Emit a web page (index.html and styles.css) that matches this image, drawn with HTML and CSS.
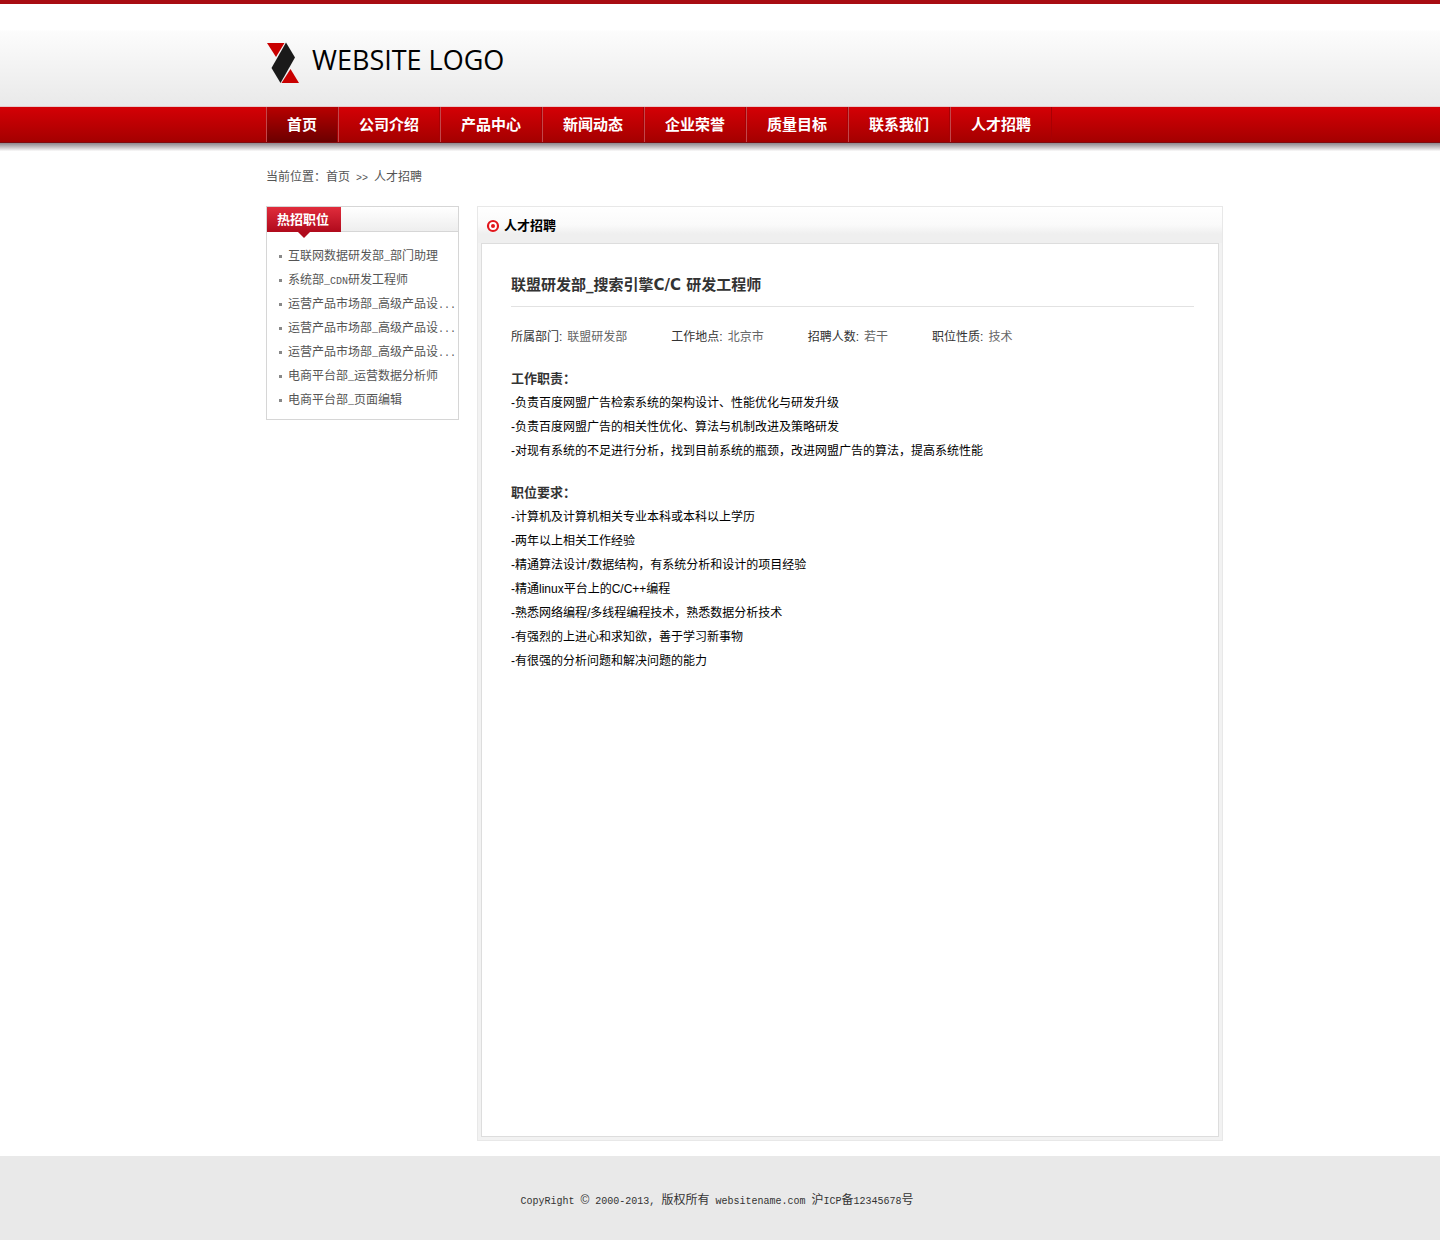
FILE: index.html
```html
<!DOCTYPE html>
<html lang="zh-CN">
<head>
<meta charset="utf-8">
<meta name="viewport" content="width=device-width, initial-scale=1">
<title>人才招聘</title>
<link rel="stylesheet" href="styles.css">
</head>
<body>
<header class="header">
  <div class="wrap">
    <a class="logo" href="#">
      <svg class="logo-mark" width="32" height="42" viewBox="0 0 32 42" aria-hidden="true">
        <path d="M0 1h17.500L9 15z" fill="#c90000"/>
        <path d="M19 .5L28 15.500 13.500 41 4.500 26z" fill="#1a1a1a"/>
        <path d="M14.500 41L23.500 27 32 41z" fill="#c90000"/>
      </svg>
      <span>WEBSITE LOGO</span>
    </a>
  </div>
</header>
<nav class="nav">
  <ul class="wrap nav-list">
    <li><a class="active" href="#">首页</a></li>
    <li><a href="#">公司介绍</a></li>
    <li><a href="#">产品中心</a></li>
    <li><a href="#">新闻动态</a></li>
    <li><a href="#">企业荣誉</a></li>
    <li><a href="#">质量目标</a></li>
    <li><a href="#">联系我们</a></li>
    <li><a href="#">人才招聘</a></li>
  </ul>
</nav>
<div class="nav-shadow"></div>
<div class="wrap">
  <div class="crumbs">当前位置：<a href="#">首页</a><span class="mono crumb-sep">&gt;&gt;</span><a href="#">人才招聘</a></div>
  <div class="columns">
    <aside class="side">
      <div class="side-head"><h2>热招职位</h2></div>
      <ul class="jobs">
        <li><a href="#">互联网数据研发部<span class="mono">_</span>部门助理</a></li>
        <li><a href="#">系统部<span class="mono">_CDN</span>研发工程师</a></li>
        <li><a href="#">运营产品市场部<span class="mono">_</span>高级产品设<span class="mono">...</span></a></li>
        <li><a href="#">运营产品市场部<span class="mono">_</span>高级产品设<span class="mono">...</span></a></li>
        <li><a href="#">运营产品市场部<span class="mono">_</span>高级产品设<span class="mono">...</span></a></li>
        <li><a href="#">电商平台部<span class="mono">_</span>运营数据分析师</a></li>
        <li><a href="#">电商平台部<span class="mono">_</span>页面编辑</a></li>
      </ul>
    </aside>
    <main class="panel">
      <div class="panel-head">
        <svg width="14" height="14" viewBox="0 0 14 14" aria-hidden="true">
          <circle cx="7" cy="7" r="5" fill="#fff" stroke="#e2161c" stroke-width="2.200"/>
          <circle cx="7" cy="7" r="2" fill="#e2161c"/>
        </svg>
        <h2>人才招聘</h2>
      </div>
      <article class="panel-body">
        <h1>联盟研发部_搜索引擎C/C 研发工程师</h1>
        <dl class="meta">
          <div><dt>所属部门:</dt><dd>联盟研发部</dd></div>
          <div><dt>工作地点:</dt><dd>北京市</dd></div>
          <div><dt>招聘人数:</dt><dd>若干</dd></div>
          <div><dt>职位性质:</dt><dd>技术</dd></div>
        </dl>
        <section>
          <h3>工作职责：</h3>
          <p>-负责百度网盟广告检索系统的架构设计、性能优化与研发升级</p>
          <p>-负责百度网盟广告的相关性优化、算法与机制改进及策略研发</p>
          <p>-对现有系统的不足进行分析，找到目前系统的瓶颈，改进网盟广告的算法，提高系统性能</p>
        </section>
        <section>
          <h3>职位要求：</h3>
          <p>-计算机及计算机相关专业本科或本科以上学历</p>
          <p>-两年以上相关工作经验</p>
          <p>-精通算法设计/数据结构，有系统分析和设计的项目经验</p>
          <p>-精通linux平台上的C/C++编程</p>
          <p>-熟悉网络编程/多线程编程技术，熟悉数据分析技术</p>
          <p>-有强烈的上进心和求知欲，善于学习新事物</p>
          <p>-有很强的分析问题和解决问题的能力</p>
        </section>
      </article>
    </main>
  </div>
</div>
<footer class="footer"><span class="mono">CopyRight </span>©<span class="mono"> 2000-2013, </span> 版权所有<span class="mono"> websitename.com </span>沪<span class="mono">ICP</span>备<span class="mono">12345678</span>号</footer>
</body>
</html>
```
FILE: styles.css
```css
* {
  box-sizing: border-box;
  margin: 0;
  padding: 0;
}

body {
  background: #fff;
  color: #000;
  font: 12px/24px "Liberation Sans", "Noto Sans CJK SC", sans-serif;
}

ul {
  list-style: none;
}

a {
  color: inherit;
  text-decoration: none;
}

.wrap {
  max-width: 1006px;
  margin: 0 auto;
  padding-left: 49px;
}

.mono {
  font-family: "Liberation Mono", monospace;
  font-size: 10px;
  line-height: 1;
}

/* Header */
.header {
  height: 107px;
  padding-top: 38px;
  border-top: 4px solid #a80d12;
  border-bottom: 1px solid #e5c9cb;
  background: linear-gradient(#fff 26px, #fcfcfc 27px, #e9e9e9);
}

.logo {
  display: inline-flex;
  align-items: center;
  gap: 13px;
  height: 42px;
  padding-left: 1px;
  font: 27px/36px "Open Sans", sans-serif;
}

.logo span {
  padding-bottom: 6px;
}

/* Navigation */
.nav {
  background: linear-gradient(#d40005, #a40000);
  border-bottom: 1px solid #7d0c10;
}

.nav-list {
  display: flex;
}

.nav a {
  display: block;
  height: 35px;
  padding: 0 20px;
  border-left: 1px solid #c2474a;
  border-right: 1px solid #a80004;
  color: #fff;
  font-size: 15px;
  font-weight: bold;
  line-height: 36px;
}

.nav .active {
  background: linear-gradient(#b80000, #6c0000);
}

.nav-shadow {
  height: 8px;
  background: linear-gradient(#8d878d, #c4bfc1 50%, #fafafa);
}

/* Breadcrumb */
.crumbs {
  padding: 14px 0 17px;
  color: #555;
}

.crumb-sep {
  margin: 0 6px;
}

.columns {
  display: flex;
  align-items: flex-start;
  gap: 18px;
}

/* Sidebar */
.side {
  flex: 0 0 193px;
  border: 1px solid #d6d6d6;
}

.side-head {
  height: 25px;
  border-bottom: 1px solid #d6d6d6;
  background: linear-gradient(#fff, #eee);
}

.side-head h2 {
  position: relative;
  width: 74px;
  height: 25px;
  padding-left: 10px;
  background: linear-gradient(#e02c3c, #b00a1c);
  color: #fff;
  font-size: 13px;
  line-height: 26px;
}

.side-head h2::after {
  content: "";
  position: absolute;
  top: 25px;
  left: 31px;
  border: 6px solid transparent;
  border-top-color: #b00a1c;
  border-bottom: 0;
}

.jobs {
  padding: 12px 0 7px 12px;
  color: #555;
  white-space: nowrap;
}

.jobs li {
  display: flex;
  align-items: center;
  gap: 6px;
}

.jobs li::before {
  content: "";
  width: 3px;
  height: 3px;
  background: #888;
}

/* Content panel */
.panel {
  flex: 1;
  min-width: 0;
  padding: 0 3px 3px;
  border: 1px solid #e8e8e8;
  background: #f2f2f2;
}

.panel-head {
  display: flex;
  align-items: center;
  gap: 4px;
  height: 36px;
  margin: 0 -3px;
  padding: 2px 0 0 8px;
  background: linear-gradient(#fff, #fafafa 50%, #efefef 75%);
}

.panel-head h2 {
  font-size: 13px;
}

.panel-body {
  min-height: 894px;
  padding: 29px 24px 29px 29px;
  border: 1px solid #ddd;
  background: #fff;
}

.panel-body h1 {
  padding-bottom: 9px;
  border-bottom: 1px solid #e2e2e2;
  color: #333;
  font: bold 15px/24px "DejaVu Sans", "Noto Sans CJK SC", sans-serif;
}

.meta {
  display: flex;
  flex-wrap: wrap;
  gap: 0 44px;
  margin-top: 18px;
}

.meta div {
  display: flex;
  gap: 5px;
}

.meta dt {
  color: #333;
}

.meta dd {
  color: #666;
}

.panel-body section {
  margin-top: 18px;
}

.panel-body h3 {
  color: #333;
  font-size: 13px;
}

/* Footer */
.footer {
  margin-top: 15px;
  padding: 32px 6px 28px 0;
  background: #e9e9e9;
  color: #333;
  text-align: center;
}
```
